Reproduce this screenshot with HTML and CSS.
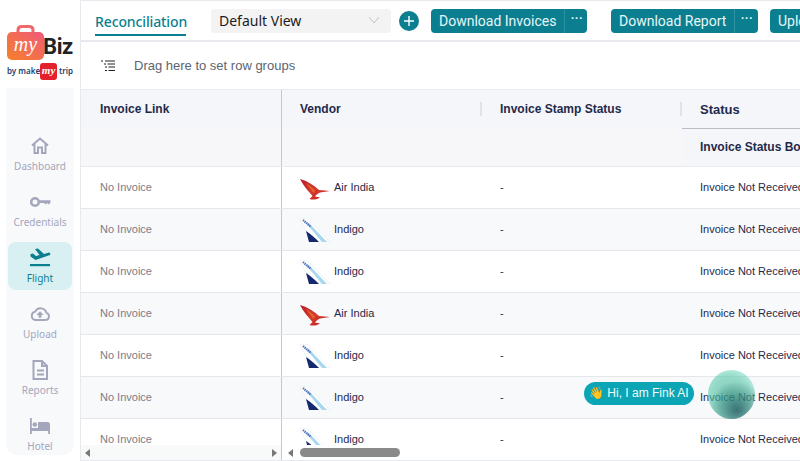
FILE: index.html
```html
<!DOCTYPE html>
<html lang="en">
<head>
<meta charset="utf-8">
<title>Reconciliation</title>
<link rel="stylesheet" href="styles.css">
</head>
<body>
<svg class="defs" width="0" height="0" aria-hidden="true">
  <defs>
    <linearGradient id="bag" x1="0" y1="1" x2="1" y2="0"><stop offset="0" stop-color="#f6802a"/><stop offset="1" stop-color="#f05a7a"/></linearGradient>
    <linearGradient id="ai" x1="0" y1="0" x2="1" y2="1"><stop offset="0" stop-color="#b81c2a"/><stop offset=".5" stop-color="#d63a28"/><stop offset="1" stop-color="#bb1e2a"/></linearGradient>
    <symbol id="airindia" viewBox="0 0 30 24">
      <path d="M0 3 C7 5 14 9 19 14 L30 15 L20 16.500 C18 17 16 19 15 20.500 L20 21.500 C16 24 12 24 9.500 23 L12.500 20 C8 15 3 9 0 3Z" fill="url(#ai)"/>
      <path d="M6 7 C9 9 12 11 15 14.500 L13.500 17 C11 13 8 10 6 7Z" fill="#e2662c"/>
    </symbol>
    <symbol id="indigo" viewBox="0 0 30 24">
      <path d="M0 1 L7 0 L30 24 L15 24 C9 17 3 8 0 1Z" fill="#fff" stroke="#dfe4ea" stroke-width=".5"/>
      <path d="M6 5 L9 5 L27 24 L22 24Z" fill="#a9d8ee"/>
      <path d="M6 13 C11 16 15 20 19 24 L9 24Z" fill="#14296e"/>
      <path d="M3 2 L11 9" stroke="#4e6fc0" stroke-width="2.200" stroke-dasharray="1.400 .7"/>
    </symbol>
  </defs>
</svg>
<div class="app">
  <aside class="side">
    <div class="logo">
      <div class="logo-top">
        <svg class="bag" viewBox="0 0 37 36" width="37" height="36">
          <path d="M11 8 V5 Q11 1.500 15 1.500 H22 Q26 1.500 26 5 V8" fill="none" stroke="#f0686a" stroke-width="3"/>
          <rect y="7" width="37" height="28" rx="5" fill="url(#bag)"/>
          <text x="18.500" y="26" class="bag-my">my</text>
        </svg>
        <span class="biz">Biz</span>
      </div>
      <div class="logo-sub">by make<span class="my-badge">my</span>trip</div>
    </div>
    <nav class="nav">
      <a class="nav-item">
        <svg class="nav-ico" viewBox="0 0 20 20"><path d="M2 9.500 L10 2.500 L18 9.500 M4.500 8 V17 H8 V11.500 H12 V17 H15.500 V8" fill="none" stroke="#a4a6bc" stroke-width="2"/></svg>
        <span>Dashboard</span>
      </a>
      <a class="nav-item">
        <svg class="nav-ico" viewBox="0 0 22 20"><circle cx="6" cy="10" r="3.800" fill="none" stroke="#a4a6bc" stroke-width="2.600"/><path d="M9 8.300 H21.500 V10.700 L19.500 12.500 L18 11 L16.500 12.500 L15 11 H9Z" fill="#a4a6bc"/></svg>
        <span>Credentials</span>
      </a>
      <a class="nav-item active">
        <svg class="nav-ico" viewBox="0 0 22 20"><path d="M1.500 6 L4 5.500 L7 8 L10.500 7 L6 1 L9 .5 L15 6 L20 4.500 Q22 5 21 7 L6.500 12 L1.500 8.500Z" fill="#0b7f90"/><rect x="1" y="16" width="20" height="2.200" fill="#0b7f90"/></svg>
        <span>Flight</span>
      </a>
      <a class="nav-item">
        <svg class="nav-ico" viewBox="0 0 24 20"><path d="M6.500 16.500 H18 A4 4 0 0 0 19 8.700 A6.500 6.500 0 0 0 6.800 7.500 A4.600 4.600 0 0 0 6.500 16.500Z" fill="none" stroke="#a4a6bc" stroke-width="2"/><path d="M12 7 L16 11 H13.500 V14 H10.500 V11 H8Z" fill="#a4a6bc"/></svg>
        <span>Upload</span>
      </a>
      <a class="nav-item">
        <svg class="nav-ico" viewBox="0 0 20 20"><path d="M3.500 1 H12 L17 6 V19 H3.500Z M12 1 V6 H17" fill="none" stroke="#a4a6bc" stroke-width="2"/><path d="M7 10.500 H14 M7 14.500 H14" stroke="#a4a6bc" stroke-width="2"/></svg>
        <span>Reports</span>
      </a>
      <a class="nav-item">
        <svg class="nav-ico" viewBox="0 0 22 20"><path d="M1 2 H2.800 V12 H9 V6 H19 Q21 6 21 8.500 V18 H19.200 V15 H2.800 V18 H1Z" fill="#a4a6bc"/><circle cx="5.800" cy="8.500" r="2.300" fill="#a4a6bc"/></svg>
        <span>Hotel</span>
      </a>
    </nav>
  </aside>

  <main class="main">
    <header class="bar">
      <div class="tab">Reconciliation</div>
      <div class="select">
        <span>Default View</span>
        <svg class="chev" viewBox="0 0 12 8" width="12" height="8"><path d="M1 1 L6 7 L11 1" fill="none" stroke="#c4c4c4" stroke-width="1"/></svg>
      </div>
      <button class="plus" type="button" aria-label="Add">
        <svg viewBox="0 0 10 10" width="10" height="10"><path d="M5 0 V10 M0 5 H10" stroke="#fff" stroke-width="1.400"/></svg>
      </button>
      <div class="split w-inv"><span class="split-main">Download Invoices</span><span class="split-more">···</span></div>
      <div class="split w-rep"><span class="split-main">Download Report</span><span class="split-more">···</span></div>
      <div class="split w-up"><span class="split-main">Upload</span></div>
    </header>

    <section class="grid">
      <div class="groups">
        <svg viewBox="0 0 14 12" width="14" height="12"><path d="M0 1 H2 M4 1 H14 M3 4 H5 M6.500 4 H14 M4 7 H6 M7.500 7 H14 M4 10.500 H6 M7.500 10.500 H14" stroke="#222" stroke-width="1"/></svg>
        <span>Drag here to set row groups</span>
      </div>

      <div class="head">
        <div class="h-cell h-first"><span>Invoice Link</span></div>
        <div class="h-cell"><span>Vendor</span></div>
        <div class="h-cell"><span>Invoice Stamp Status</span></div>
        <div class="h-cell h-group">
          <div class="h-status">Status</div>
          <div class="h-sub">Invoice Status Box</div>
        </div>
      </div>

      <div class="rows">
        <div class="row"><div class="c c-link">No Invoice</div><div class="c c-vendor"><svg class="al"><use href="#airindia"/></svg>Air India</div><div class="c c-stamp">-</div><div class="c c-status">Invoice Not Received</div></div>
        <div class="row"><div class="c c-link">No Invoice</div><div class="c c-vendor"><svg class="al"><use href="#indigo"/></svg>Indigo</div><div class="c c-stamp">-</div><div class="c c-status">Invoice Not Received</div></div>
        <div class="row"><div class="c c-link">No Invoice</div><div class="c c-vendor"><svg class="al"><use href="#indigo"/></svg>Indigo</div><div class="c c-stamp">-</div><div class="c c-status">Invoice Not Received</div></div>
        <div class="row"><div class="c c-link">No Invoice</div><div class="c c-vendor"><svg class="al"><use href="#airindia"/></svg>Air India</div><div class="c c-stamp">-</div><div class="c c-status">Invoice Not Received</div></div>
        <div class="row"><div class="c c-link">No Invoice</div><div class="c c-vendor"><svg class="al"><use href="#indigo"/></svg>Indigo</div><div class="c c-stamp">-</div><div class="c c-status">Invoice Not Received</div></div>
        <div class="row"><div class="c c-link">No Invoice</div><div class="c c-vendor"><svg class="al"><use href="#indigo"/></svg>Indigo</div><div class="c c-stamp">-</div><div class="c c-status">Invoice Not Received</div></div>
        <div class="row"><div class="c c-link">No Invoice</div><div class="c c-vendor"><svg class="al"><use href="#indigo"/></svg>Indigo</div><div class="c c-stamp">-</div><div class="c c-status">Invoice Not Received</div></div>
      </div>

      <div class="scroll">
        <div class="track-left">
          <span class="arr-l"></span>
          <span class="arr-r"></span>
        </div>
        <div class="track-right">
          <span class="arr-l"></span>
          <span class="thumb"></span>
        </div>
      </div>
    </section>
  </main>
</div>

<div class="fink-pill"><span class="wave">👋</span> Hi, I am Fink AI</div>
<div class="fink-orb"></div>
</body>
</html>
```
FILE: styles.css
```css
* { box-sizing: border-box; }
html, body { margin: 0; padding: 0; width: 800px; height: 461px; overflow: hidden; background: #fff; }
body { font-family: "Liberation Sans", Arial, sans-serif; position: relative; }
.defs { position: absolute; }
.app { display: flex; width: 800px; height: 461px; }

/* sidebar */
.side { width: 80px; flex: none; padding: 6px 6px 6px; position: relative; display: flex; flex-direction: column; height: 461px; }
.side::before { content: ""; position: absolute; left: 6px; top: 6px; width: 68px; height: 20px; background: #f8f9fb; border-radius: 12px 12px 0 0; z-index: -1; }
.logo { background: #fff; margin: 10px 0 0; height: 72px; flex: none; width: 68px; }
.logo-top { display: flex; align-items: flex-end; height: 45px; padding-top: 9px; margin-left: 1px; }
.bag { flex: none; }
.bag-my { font-family: "Liberation Serif", serif; font-style: italic; font-size: 20px; fill: #fff; text-anchor: middle; }
.biz { font-family: "Roboto", sans-serif; font-weight: 700; font-size: 22px; line-height: 26px; color: #222; margin-left: -1px; letter-spacing: -.4px; height: 27px; }
.logo-sub { display: flex; align-items: center; font-family: "Noto Sans", sans-serif; font-weight: 600; font-size: 8px; line-height: 18px; color: #23406e; margin: 1px 0 0 1px; white-space: nowrap; }
.my-badge { display: inline-block; width: 17px; height: 17px; border-radius: 3px; background: #e3202c; color: #fff; font-family: "Liberation Serif", serif; font-style: italic; font-size: 11px; line-height: 15px; text-align: center; margin: 0 2px 0 0; }
.nav { flex: 1; background: #f8f9fb; border-radius: 0 0 12px 12px; padding: 42px 2px 0; overflow: hidden; display: flex; flex-direction: column; gap: 8px; min-height: 0; }
.nav-item { flex: none; display: flex; flex-direction: column; align-items: center; height: 48px; padding-top: 6px; border-radius: 8px; color: #a4a6bc; font-family: "Noto Sans", sans-serif; font-size: 10px; line-height: 16px; }
.nav-item span { margin-top: 2px; }
.nav-ico { width: 22px; height: 20px; display: block; }
.nav-item.active { background: #d9f0f3; color: #0b7f90; }

/* main */
.main { flex: 1; min-width: 0; display: flex; flex-direction: column; border-top: 1px solid #e8e9ee; border-left: 1px solid #e8e9ee; }
.bar { height: 41px; flex: none; display: flex; align-items: flex-start; border-bottom: 2px solid #e8e9ee; padding-left: 14px; white-space: nowrap; overflow: hidden; }
.tab { flex: none; width: 91px; height: 35px; padding-top: 11px; border-bottom: 2px solid #0b7f90; color: #0b7f90; font-family: "Noto Sans", sans-serif; font-weight: 500; font-size: 14px; line-height: 20px; letter-spacing: -.12px; margin-right: 25px; }
.select { flex: none; width: 180px; height: 24px; margin-top: 8px; background: #f3f3f3; border-radius: 4px; display: flex; justify-content: space-between; align-items: center; padding: 0 11px 2px 8px; font-family: "Noto Sans", sans-serif; font-size: 14px; color: #1c1c1c; }
.plus { flex: none; width: 20px; height: 20px; margin: 10px 0 0 8px; border: 0; border-radius: 50%; background: #0b7f90; padding: 0; display: flex; align-items: center; justify-content: center; }
.split { height: 24px; margin-top: 8px; background: #0b7f90; border-radius: 4px; color: #e6f6f8; font-family: "Roboto", sans-serif; font-size: 14px; line-height: 24px; display: flex; flex: none; }
.split-main { padding: 0 8px; flex: 1; text-align: center; }
.split-more { width: 24px; flex: none; text-align: center; border-left: 1px solid #2d93a2; font-weight: 700; font-size: 12px; line-height: 21px; letter-spacing: .5px; }
.w-inv { width: 156px; margin-left: 12px; }
.w-rep { width: 147px; margin-left: 24px; }
.w-up { width: 60px; margin-left: 12px; }
.w-up .split-main { text-align: left; }

/* grid */
.grid { flex: 1; min-height: 0; display: flex; flex-direction: column; border-bottom: 1px solid #e8e9ee; border-top-left-radius: 6px; overflow: hidden; }
.groups { height: 48px; flex: none; display: flex; align-items: center; gap: 19px; padding-left: 20px; border-bottom: 1px solid #e8e9ee; font-family: "Liberation Sans", sans-serif; font-size: 13px; color: #5c6470; }
.head { height: 77px; flex: none; display: grid; grid-template-columns: 201px 200px 200px 1fr; background: #f5f6fa; border-bottom: 1px solid #e8e9ee; font-weight: 700; font-size: 12px; color: #1f2a4a; white-space: nowrap; }
.h-cell { position: relative; padding: 12px 0 0 18px; line-height: 14px; background: linear-gradient(#f5f6fa 38px, #f7f7f9 38px); }
.h-cell:not(.h-group)::after { content: ""; position: absolute; right: 0; top: 12px; width: 2px; height: 14px; background: #dde2eb; }
.h-first { padding-left: 19px; border-right: 1px solid #c4c6d0; }
.h-cell.h-first::after { display: none; }
.h-group { padding: 0; background: #f5f6fa; overflow: hidden; }
.h-status { height: 39px; padding: 13px 0 0 18px; border-bottom: 1px solid #babcc6; font-size: 13px; }
.h-sub { padding: 11px 0 0 18px; }
.rows { flex: 1; min-height: 0; overflow: hidden; }
.row { height: 42px; display: grid; grid-template-columns: 201px 200px 200px 1fr; border-bottom: 1px solid #e4e6ea; font-size: 11px; color: #1f2a4a; white-space: nowrap; background: #fff; }
.row:nth-child(even) { background: #f8f9fb; }
.c { display: flex; align-items: center; padding: 0 0 2px 18px; }
.c-link { border-right: 1px solid #c4c6d0; color: #7c7c86; padding-left: 19px; }
.c-vendor { gap: 4px; }
.al { width: 30px; height: 24px; flex: none; margin-top: 2px; }
.scroll { height: 15px; flex: none; display: flex; background: #fff; }
.track-left { width: 201px; background: #f8f9f9; border-right: 1px solid #c4c6d0; display: flex; justify-content: space-between; align-items: center; padding: 0 4px; }
.track-right { flex: 1; display: flex; align-items: center; padding-left: 6px; }
.arr-l { width: 0; height: 0; border: 4px solid transparent; border-left: 0; border-right: 5px solid #777; }
.arr-r { width: 0; height: 0; border: 4px solid transparent; border-right: 0; border-left: 5px solid #777; }
.thumb { width: 100px; height: 9px; border-radius: 5px; background: #8a8a8a; margin-left: 7px; }

/* assistant */
.fink-pill { position: absolute; left: 584px; top: 382px; width: 110px; height: 23px; border-radius: 12px; background: #0ba5b5; color: #f2fbfc; font-size: 12px; line-height: 23px; padding-left: 5px; white-space: nowrap; }
.wave { font-size: 12px; }
.fink-orb { position: absolute; left: 708px; top: 370px; width: 47px; height: 49px; border-radius: 50%;
  background:
    radial-gradient(circle at 62% 82%, rgba(20,70,80,.7) 0, rgba(25,100,100,.4) 30%, rgba(30,140,120,0) 58%),
    radial-gradient(circle at 45% 50%, rgba(70,180,150,.7) 0, rgba(90,200,170,.6) 55%, rgba(130,225,205,.5) 78%, rgba(170,235,225,.3) 100%); }
```
